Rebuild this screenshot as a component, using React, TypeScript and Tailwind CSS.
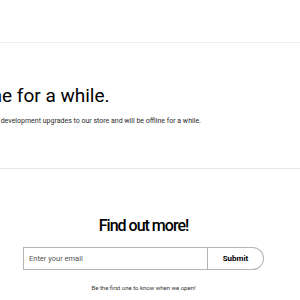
export default function App() {
  return (
    <div className="h-[300px] w-[300px] overflow-hidden bg-white font-['Roboto',sans-serif] text-black antialiased">
      {/* Header */}
      <div className="h-[43px] border-b border-[#eeeeee]" />

      {/* Hero */}
      <div className="h-[126px] overflow-hidden border-b border-[#e8e8e8] pt-[41px]">
        <h1 className="ml-[-91px] whitespace-nowrap text-[19px] leading-[24px] font-normal">
          We&apos;re offline for a while.
        </h1>
        <p className="ml-[-62px] mt-[8px] whitespace-nowrap text-[7px] leading-[10px] text-[#2a2a2a]">
          We&apos;re making some development upgrades to our store and will be offline for a while.
        </p>
      </div>

      {/* Newsletter */}
      <div className="flex w-[287px] flex-col items-center pt-[47px]">
        <h2 className="text-[16px] leading-[20px] font-medium tracking-[-1px]">Find out more!</h2>
        <form className="mt-[11px] flex h-[23px] w-[241px] rounded-l-[3px] rounded-r-full border border-[#b5b5b5]">
          <input
            placeholder="Enter your email"
            className="min-w-0 flex-1 bg-transparent pl-[5px] text-[7.5px] text-[#333] outline-none placeholder:text-[#555]"
          />
          <button
            type="button"
            className="w-[56px] border-l border-[#b5b5b5] text-[8px] font-bold"
          >
            Submit
          </button>
        </form>
        <p className="mt-[14px] text-[6px] leading-[8px] text-[#333]">
          Be the first one to know when we open!
        </p>
      </div>
    </div>
  );
}
